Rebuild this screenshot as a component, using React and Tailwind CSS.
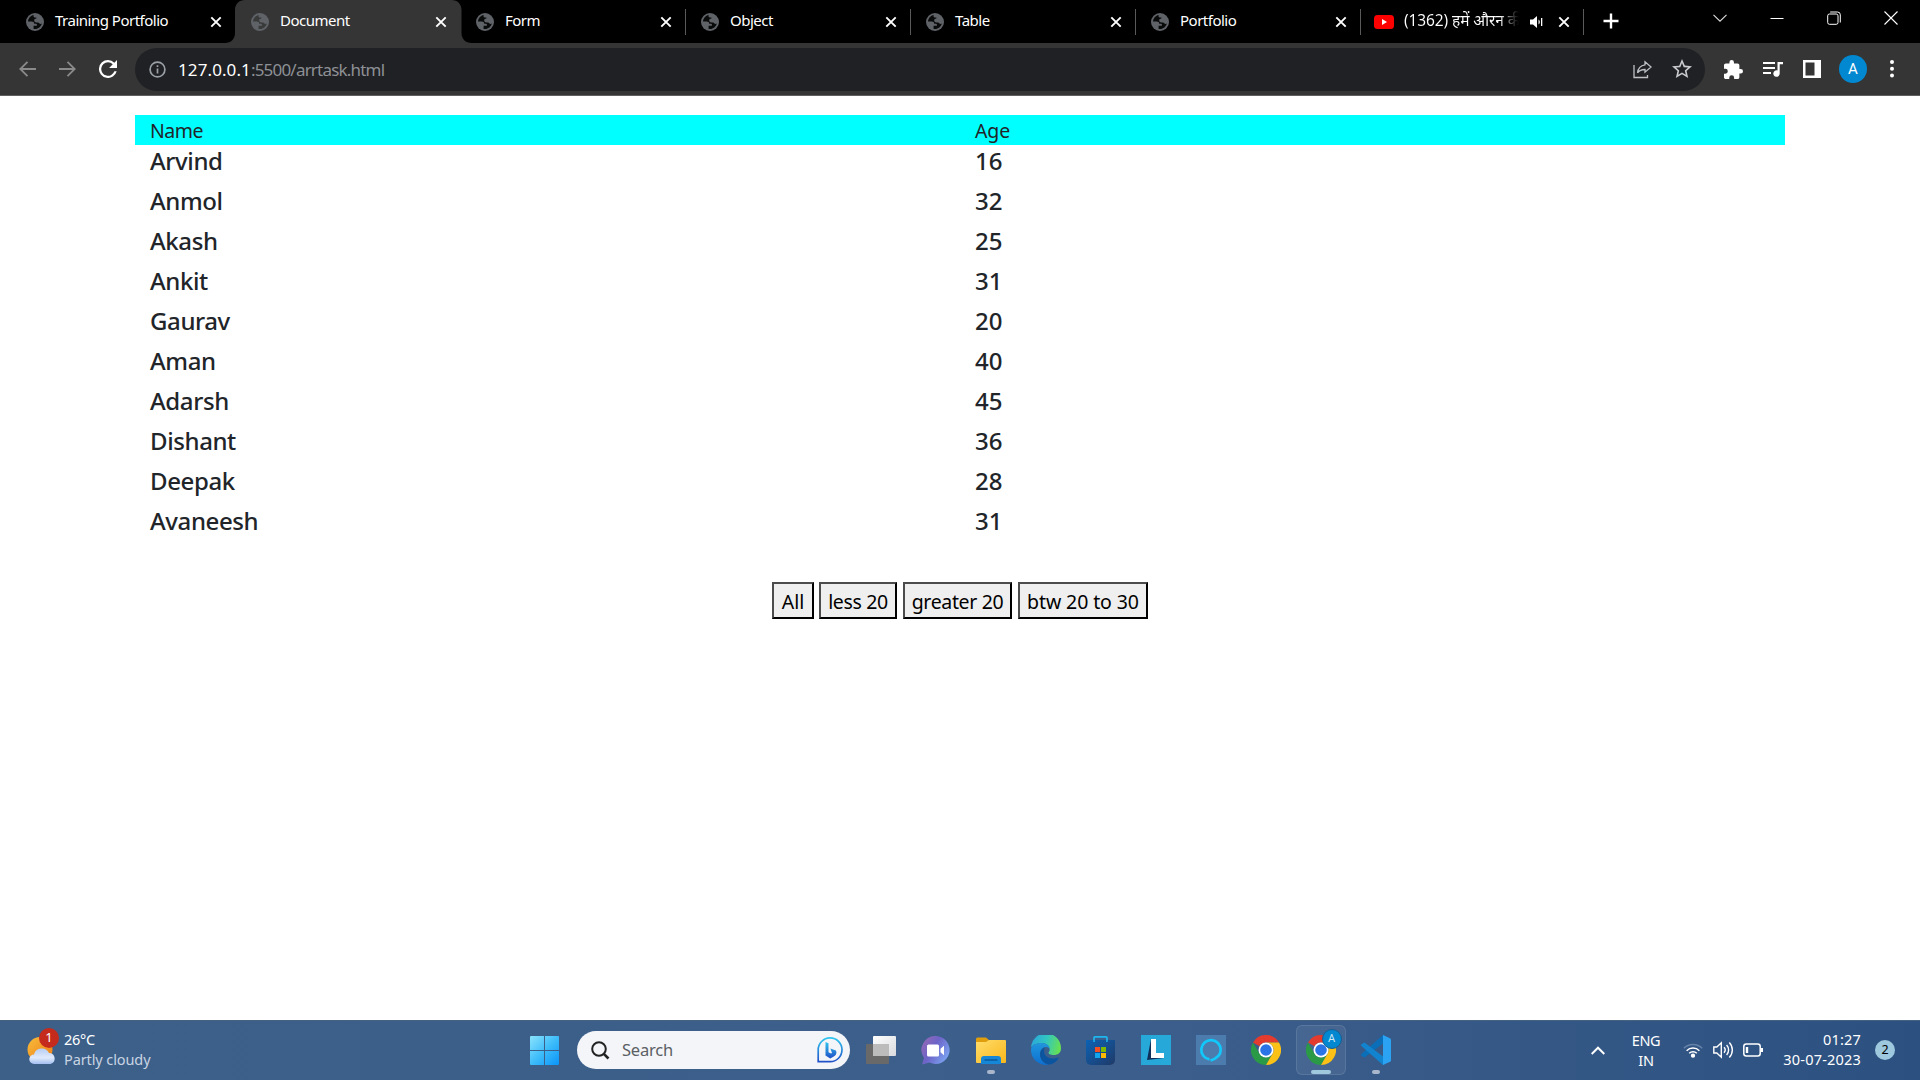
import React from "react";

const people = [
  ["Arvind", 16],
  ["Anmol", 32],
  ["Akash", 25],
  ["Ankit", 31],
  ["Gaurav", 20],
  ["Aman", 40],
  ["Adarsh", 45],
  ["Dishant", 36],
  ["Deepak", 28],
  ["Avaneesh", 31],
];

const Globe = ({ ink }) => (
  <svg width="18" height="18" viewBox="0 0 18 18" className="shrink-0">
    <circle cx="9" cy="9" r="9" fill="#5f6368" />
    <path d="M7.6 2.1C4.6 2.7 2.2 5.300 2 8.600L5.600 8.600C7.300 8.600 8.200 9.400 8.200 10.700L10 10.700C10.600 10.700 10.900 11 10.900 11.600L10.900 12.700L7.600 12.700L7.600 15.900C8.100 16 8.600 16 9 16C12.400 16 15 13.600 15.800 10.500C14.900 11.200 13.600 11 13.100 9.900C12.600 9.600 11.700 9.500 10.800 9.500C9.200 9.500 8.200 8.700 8.200 7.500C8.200 6.300 9.100 5.600 10.400 5.600L10.400 4.600L8.700 4.600C7.900 4.600 7.400 3.900 7.600 2.100Z" fill={ink} fillOpacity=".9" />
  </svg>
);

const CloseX = () => (
  <svg width="12" height="12" viewBox="0 0 12 12" className="shrink-0" stroke="#fff" strokeWidth="1.900">
    <path d="M1.300 1.300 10.700 10.700M10.700 1.300 1.300 10.700" />
  </svg>
);

const Tab = ({ title, active, sep }) => (
  <div className="relative flex h-[43px] w-[225px] shrink-0 items-center pl-4 pr-[13px]">
    {active && (
      <svg className="absolute -left-[10px] top-0" width="247" height="43" viewBox="0 0 247 43" fill="#353535">
        <path d="M0 43C6 43 10 39 10 33V10C10 4 14 0 20 0H226.500C232.500 0 236.500 4 236.500 10V33C236.500 39 240.500 43 246.500 43Z" />
      </svg>
    )}
    <div className="relative flex w-full items-center">
      <Globe ink={active ? "#353535" : "#000"} />
      <span className="-mt-[3px] ml-[11px] flex-1 whitespace-nowrap text-[15px] leading-5 tracking-[-0.5px] text-white">{title}</span>
      <CloseX />
    </div>
    {sep && <div className="absolute right-[-1px] top-[9px] h-[26px] w-px bg-[#5a5a5a]" />}
  </div>
);

const Chrome = () => (
  <svg width="30" height="30" viewBox="0 0 48 48">
    <path d="M3.200 12A24 24 0 0 1 44.800 12H24A12 12 0 0 0 13.600 18Z" fill="#e33b2e" />
    <path d="M3.200 12A24 24 0 0 0 24 48L34.400 30A12 12 0 0 1 13.600 30Z" fill="#2a9a47" />
    <path d="M44.800 12A24 24 0 0 1 24 48L34.400 30A12 12 0 0 0 24 12Z" fill="#fbc116" />
    <circle cx="24" cy="24" r="12" fill="#fff" />
    <circle cx="24" cy="24" r="9.300" fill="#2b74e8" />
  </svg>
);

const Slot = ({ children, dot, wide, box }) => (
  <div className="relative flex h-[60px] w-[55px] items-center justify-center">
    {box && <div className="absolute left-[3px] top-[5px] h-[50px] w-[50px] rounded-[6px] border border-white/10 bg-white/7" />}
    <div className="relative flex">{children}</div>
    {dot && <div className="absolute left-[24px] top-[50px] h-1 w-2 rounded-full bg-[#a9b6cb]" />}
    {wide && <div className="absolute left-[18px] top-[50px] h-1 w-5 rounded-full bg-[#9fc9dc]" />}
  </div>
);

const btn =
  "h-[37px] border-2 border-t-[#4c4c4c] border-l-[#4c4c4c] border-r-black border-b-black bg-[#efefef] text-center text-[19.5px] leading-[35px] text-black whitespace-nowrap ";

export default function App() {
  return (
    <div className="flex h-[1080px] w-[1920px] flex-col overflow-hidden bg-white font-['Noto_Sans','Open_Sans',sans-serif]">
      <header className="flex h-[43px] shrink-0 bg-black pl-[10px]">
        <Tab title="Training Portfolio" />
        <Tab title="Document" active />
        <Tab title="Form" sep />
        <Tab title="Object" sep />
        <Tab title="Table" sep />
        <Tab title="Portfolio" sep />
        <div className="relative flex w-[224px] shrink-0 items-center pl-[14px] pr-[14px]">
          <svg width="20" height="14" viewBox="0 0 20 14" className="shrink-0">
            <rect width="20" height="14" rx="3.500" fill="#f00" />
            <path d="M8 4v6l5-3z" fill="#fff" />
          </svg>
          <span className="-mt-[3px] ml-[10px] w-[117px] shrink-0 overflow-hidden whitespace-nowrap bg-gradient-to-r from-white from-82% to-black bg-clip-text text-[15.500px] leading-7 tracking-[-0.1px] text-transparent">
            (1362) हमें औरन की
          </span>
          <svg width="13" height="12" viewBox="0 0 13 12" className="ml-[9px] shrink-0" fill="#fff">
            <path d="M0 3.500h3L7 0v12L3 8.500H0zM8.500 3.500v5a3 3 0 0 0 0-5zM11 2h1.300v8H11z" />
          </svg>
          <div className="ml-auto flex"><CloseX /></div>
          <div className="absolute right-0 top-[9px] h-[26px] w-px bg-[#5a5a5a]" />
        </div>
        <svg width="16" height="16" viewBox="0 0 16 16" className="ml-[19px] mt-[13px]" stroke="#fff" strokeWidth="2.400">
          <path d="M8 .5v15M.5 8h15" />
        </svg>
        <div className="ml-auto mr-[22px] flex h-9 items-center gap-[43px] text-white">
          <svg width="14" height="14" viewBox="0 0 14 14" fill="none" stroke="#ddd" strokeWidth="1.100"><path d="M.5 3.800 7 10.200l6.500-6.400" /></svg>
          <svg width="14" height="14" viewBox="0 0 14 14" stroke="#fff"><path d="M.5 7.500h13" /></svg>
          <svg width="14" height="14" viewBox="0 0 14 14" fill="none" stroke="#fff"><rect x=".7" y="3" width="10.300" height="10.300" rx="1.800" /><path d="M3.200 1H10.500a2.800 2.800 0 0 1 2.800 2.800v7.700" /></svg>
          <svg width="14" height="14" viewBox="0 0 14 14" stroke="#fff" strokeWidth="1.100"><path d="m.5.5 13 13M13.500.5l-13 13" /></svg>
        </div>
      </header>

      <nav className="flex h-[53px] shrink-0 items-center border-b border-[#5f5f5f] bg-[#353535] pl-[19px]">
        <svg width="17" height="16" viewBox="0 0 17 16" fill="none" stroke="#8a8a8a" strokeWidth="1.800"><path d="M17 8H1.500M8.500 .8 1.300 8l7.200 7.200" /></svg>
        <svg width="17" height="16" viewBox="0 0 17 16" className="ml-[23px]" fill="none" stroke="#8a8a8a" strokeWidth="1.800"><path d="M0 8h15.500M8.500 .8 15.700 8l-7.200 7.200" /></svg>
        <svg width="18" height="18" viewBox="4 4 16 16" className="ml-[23px]" fill="#fff"><path d="M17.650 6.350A7.960 7.960 0 0 0 12 4a8 8 0 1 0 7.730 10h-2.080A6 6 0 1 1 12 6c1.660 0 3.140.69 4.220 1.780L13 11h7V4z" /></svg>
        <div className="ml-[18px] flex h-[43px] w-[1570px] items-center rounded-full bg-[#202124] pl-[14px] pr-[13px]">
          <svg width="17" height="17" viewBox="0 0 17 17" fill="none" stroke="#9aa0a6" strokeWidth="1.700"><circle cx="8.500" cy="8.500" r="7.400" /><path d="M8.500 7.500v5M8.500 4.300V6" /></svg>
          <span className="ml-[12px] pt-px text-[17px] leading-6 tracking-[-0.8px] text-[#8d9095]"><span className="tracking-[0.1px] text-white">127.0.0.1</span>:5500/arrtask.html</span>
          <svg width="19" height="19" viewBox="0 0 19 19" className="ml-auto" fill="none" stroke="#bdc1c6" strokeWidth="1.300"><path d="M1 5v12.500h13.500V15M12 1.800l6 5.200-6 5.200V9.500c-3.500 0-5.800 1-7.500 3.400C5 8.500 7.800 5.400 12 4.800z" /></svg>
          <svg width="20" height="20" viewBox="2 2 20 20" className="ml-[20px]" fill="#c8cacd"><path d="M22 9.240l-7.190-.62L12 2 9.190 8.630 2 9.240l5.460 4.730L5.820 21 12 17.270 18.180 21l-1.630-7.030L22 9.240zM12 15.400l-3.760 2.270 1-4.280-3.320-2.880 4.380-.38L12 6.100l1.710 4.040 4.380.38-3.320 2.880 1 4.280L12 15.400z" /></svg>
        </div>
        <svg width="19" height="19" viewBox="2 1 21 21" className="ml-[19px]" fill="#fff"><path d="M20.500 11H19V7c0-1.100-.9-2-2-2h-4V3.500a2.500 2.500 0 0 0-5 0V5H4c-1.100 0-1.990.9-1.990 2v3.800H3.500a2.700 2.700 0 0 1 0 5.400H2V20c0 1.100.9 2 2 2h3.800v-1.500a2.700 2.700 0 0 1 5.400 0V22H17c1.100 0 2-.9 2-2v-4h1.500a2.500 2.500 0 0 0 0-5z" /></svg>
        <svg width="20" height="16" viewBox="0 0 20 16" className="ml-[20px]" fill="#fff"><path d="M0 1h12v1.900H0zM0 6h12v1.900H0zM0 11h8v1.900H0zM14.500 1H20v2.200h-3.300V12.500a3.200 3.200 0 1 1-2.200-3z" /></svg>
        <svg width="18" height="18" viewBox="0 0 18 18" className="ml-[20px]"><path fill="#fff" fillRule="evenodd" d="M0 0h18v18H0zM2.500 2.500v13h9v-13z" /></svg>
        <div className="ml-[18px] flex h-7 w-7 items-center justify-center rounded-full bg-[#0288d1] font-[Roboto] text-[15px] text-white">A</div>
        <svg width="4" height="18" viewBox="0 0 4 18" className="ml-[23px]" fill="#fff"><circle cx="2" cy="2" r="2" /><circle cx="2" cy="8.800" r="2" /><circle cx="2" cy="15.600" r="2" /></svg>
      </nav>

      <main className="flex flex-1 flex-col pl-[135px] pr-[135px] pt-[19px] text-[#212529]">
        <div className="grid h-[30px] grid-cols-2 bg-[#0ff] text-[19.500px] leading-[32px]">
          <div className="pl-[15px] tracking-[-0.5px]">Name</div>
          <div className="pl-[15px] tracking-[-0.1px]">Age</div>
        </div>
        {people.map(([name, age]) => (
          <div key={name} className="mb-[10px] grid h-[30px] grid-cols-2 text-[24px] font-[550] leading-[31px]">
            <div className="pl-[15px] tracking-[-0.4px]">{name}</div>
            <div className="pl-[15px] tracking-[0.1px]">{age}</div>
          </div>
        ))}
        <div className="mt-[37px] flex justify-center">
          <button className={btn + "w-[42px]"}>All</button>
          <button className={btn + "ml-[5px] w-[78px] tracking-[-0.35px]"}>less 20</button>
          <button className={btn + "ml-[6px] w-[109px] tracking-[-0.35px]"}>greater 20</button>
          <button className={btn + "ml-[6px] w-[130px] tracking-[-0.1px]"}>btw 20 to 30</button>
        </div>
      </main>

      <footer className="flex h-[60px] shrink-0 items-center border-t border-[#44617f] bg-gradient-to-r from-[#3c6088] via-[#3c5e8c] via-60% to-[#2c5180] pb-px text-white">
        <div className="flex w-[530px] items-center pl-[27px]">
          <div className="relative h-[30px] w-[30px]">
            <svg width="30" height="30" viewBox="0 0 30 30">
              <defs>
                <linearGradient id="sun" x1="0" y1="0" x2="1" y2="1"><stop stopColor="#f7bd3c" /><stop offset="1" stopColor="#ee7a12" /></linearGradient>
                <linearGradient id="cloud" x1="0" y1="0" x2="0" y2="1"><stop stopColor="#b7cdf4" /><stop offset=".6" stopColor="#e0eafb" /><stop offset="1" stopColor="#a3bff0" /></linearGradient>
              </defs>
              <circle cx="13" cy="14.500" r="12.500" fill="url(#sun)" />
              <path d="M7 29a4.500 4.500 0 0 1 0-9.500 8 8 0 0 1 15-1.500 5.600 5.600 0 0 1 1.500 11z" fill="url(#cloud)" />
            </svg>
            <div className="absolute -top-[7px] left-3 flex h-5 w-5 items-center justify-center rounded-full bg-[#c42b1c] text-[13px]">1</div>
          </div>
          <div className="ml-[7px] pb-[3px] text-[14.500px] leading-5">
            <div className="tracking-[-0.3px]">26°C</div>
            <div className="tracking-[-0.1px] text-[#c9d4e3]">Partly cloudy</div>
          </div>
        </div>
        <svg width="29" height="29" viewBox="0 0 29 29">
          <defs><linearGradient id="win" gradientUnits="userSpaceOnUse" x1="0" y1="0" x2="29" y2="29"><stop stopColor="#8be3fd" /><stop offset=".5" stopColor="#3fbdfa" /><stop offset="1" stopColor="#0a94f8" /></linearGradient></defs>
          <path fill="url(#win)" d="M1 0h13v14H0V1a1 1 0 0 1 1-1zM15 0h13a1 1 0 0 1 1 1v13H15zM0 15h14v14H1a1 1 0 0 1-1-1zM15 15h14v13a1 1 0 0 1-1 1H15z" />
        </svg>
        <div className="ml-[18px] flex h-[38px] w-[273px] items-center rounded-full bg-[#f3f5f9] pl-[14px] pr-[7px]">
          <svg width="19" height="19" viewBox="0 0 19 19" fill="none" stroke="#222" strokeWidth="2"><circle cx="8" cy="8" r="6.800" /><path d="m12.800 12.800 4.700 4.700" strokeWidth="2.600" /></svg>
          <span className="ml-[12px] pt-px text-[16.500px] tracking-[-0.2px] text-[#5b5f64]">Search</span>
          <svg width="26" height="26" viewBox="0 0 26 26" className="ml-auto" fill="none">
            <defs><linearGradient id="bing" x1="0" y1="0" x2="0" y2="1"><stop stopColor="#2fc6ee" /><stop offset="1" stopColor="#2050c8" /></linearGradient></defs>
            <path d="M1.200 24.700V13A11.900 11.900 0 1 1 13 24.700z" stroke="url(#bing)" strokeWidth="1.700" />
            <path d="M8.500 5l3 1.200v9l2.500 1.300 1-.6-1.600-4.400 5.500 2c1.500 3-.5 5.300-2.500 6.300l-3.200 1.600-4.700-3z" fill="url(#bing)" />
          </svg>
        </div>
        <div className="ml-[3px] flex">
          <Slot>
            <svg width="30" height="28" viewBox="0 0 30 28"><defs><linearGradient id="tv" x1="0" y1="0" x2="1" y2="1"><stop stopColor="#fff" /><stop offset="1" stopColor="#d8dadd" /></linearGradient></defs>
              <rect y="8" width="23" height="20" rx="1" fill="#696969" /><rect x="7" width="23" height="20" rx="1" fill="url(#tv)" /><path d="M7 8h16v12H7z" fill="#bcbcbc" /></svg>
          </Slot>
          <Slot>
            <svg width="29" height="29" viewBox="0 0 29 29"><defs><linearGradient id="chat" x1="0" y1="0" x2="1" y2=".6"><stop stopColor="#9a6bb0" /><stop offset=".5" stopColor="#6d63c8" /><stop offset="1" stopColor="#7aa0ee" /></linearGradient></defs>
              <path d="M15 0a14 14 0 1 1-6.500 26.600L1 28.500l2-6.500A14 14 0 0 1 15 0z" fill="url(#chat)" /><rect x="6" y="8.500" width="12" height="12" rx="1.500" fill="#fff" /><path d="M19.500 12.800l3.500-3v9.400l-3.500-3z" fill="#fff" /></svg>
          </Slot>
          <Slot dot>
            <svg width="30" height="28" viewBox="0 0 30 28"><defs><linearGradient id="fold" x1="0" y1="0" x2="1" y2="1"><stop stopColor="#ffdc6b" /><stop offset="1" stopColor="#f9b81b" /></linearGradient></defs>
              <path d="M0 7V3a1.500 1.500 0 0 1 1.500-1.500H10L13 4v4H0z" fill="#e09d0c" /><path d="M0 6h10l3-2h16a1 1 0 0 1 1 1v21a1 1 0 0 1-1 1H1a1 1 0 0 1-1-1z" fill="url(#fold)" /><path d="M5 28v-5a3 3 0 0 1 3-3h14a3 3 0 0 1 3 3v5z" fill="#1587d6" /><path d="M9 24h12" stroke="#0a5a9c" strokeWidth="1.300" strokeLinecap="round" /></svg>
          </Slot>
          <Slot>
            <svg width="30" height="30" viewBox="0 0 30 30"><defs>
              <linearGradient id="e1" x1="0" y1=".3" x2="1" y2=".5"><stop stopColor="#2aa5dc" /><stop offset=".5" stopColor="#32c6c0" /><stop offset="1" stopColor="#66e052" /></linearGradient>
              <linearGradient id="e2" x1="0" y1="0" x2="0" y2="1"><stop stopColor="#2196dd" /><stop offset="1" stopColor="#0c6fd0" /></linearGradient></defs>
              <path d="M0 13A15 15 0 0 1 30 13.500C30 18 26.500 20 23 20c-4 0-5.500-1.200-5.500-2.200 0-.8 1.200-1.400 1.200-3.300C18.700 10.800 15 8 10.500 8 5 8 1 10.500 0 13z" fill="url(#e1)" />
              <path d="M0 15C0 10.500 5 8 10.500 8c4.800 0 8.200 2.900 8.200 6.300-1-1.800-2.500-2.300-3.700-2.300-3 0-6 3-6 7.300C9 24 12.500 29 18 29.700A15 15 0 0 1 0 15z" fill="url(#e2)" />
              <path d="M13.500 12.300C10.500 13.500 9 16.500 9 19.300 9 24.500 13.500 30 19 29.500c3.500-.8 6.800-3.300 8.600-6.300.3-.6-.2-1-.8-.7-1.500.7-3 1-5 1-5 0-8.700-3.200-8.700-7 0-2 .4-3.400.4-4.200z" fill="#0b55a0" /></svg>
          </Slot>
          <Slot>
            <svg width="29" height="29" viewBox="0 0 29 29"><defs><linearGradient id="st" x1="0" y1="0" x2="1" y2="1"><stop stopColor="#0c62b4" /><stop offset="1" stopColor="#203a68" /></linearGradient></defs>
              <path d="M8 6V1.800A1.300 1.300 0 0 1 9.300.8h10.400A1.300 1.300 0 0 1 21 1.800V6" fill="none" stroke="#1fb6ee" strokeWidth="1.700" /><path d="M0 4h29v20a5 5 0 0 1-5 5H5a5 5 0 0 1-5-5z" fill="url(#st)" /><path d="M7.300 4h1.500v2H7.300zM20.200 4h1.500v2h-1.500z" fill="#1fb6ee" />
              <path d="M9 11h5v5H9z" fill="#f25022" /><path d="M15 11h5v5h-5z" fill="#7fba00" /><path d="M9 17h5v5H9z" fill="#12a5ee" /><path d="M15 17h5v5h-5z" fill="#ffb900" /></svg>
          </Slot>
          <Slot>
            <svg width="30" height="30" viewBox="0 0 30 30"><path d="M0 0h30v30H0z" fill="#26a9d9" /><path d="M10 4L6 25l17-2-12-3z" fill="#10305c" /><path d="M10 4h5v14h8v5H10z" fill="#fff" /></svg>
          </Slot>
          <Slot>
            <svg width="30" height="30" viewBox="0 0 30 30"><path d="M0 0h30v30H0z" fill="#4b7cad" /><path d="M13.500 24.400A9.700 9.700 0 1 1 24.700 15C24.700 20.500 19 24 14.500 25.500" fill="none" stroke="#12c8fa" strokeWidth="2.700" /></svg>
          </Slot>
          <Slot><Chrome /></Slot>
          <Slot wide box>
            <Chrome />
            <div className="absolute -top-[6px] left-4 flex h-5 w-5 items-center justify-center rounded-full border border-[#1a5d8f] bg-[#0288d1] font-[Roboto] text-[11px] text-[#cfe8f5]">A</div>
          </Slot>
          <Slot dot>
            <svg width="30" height="30" viewBox="0 0 30 30"><path d="M22 0L22 8.500 3.500 22.500.4 20.700c-.5-.5-.5-1.300 0-1.800z" fill="#0a6fb8" /><path d="M22 30V21.500L3.500 7.500.4 9.300c-.5.500-.5 1.300 0 1.800z" fill="#1284cf" /><path d="M22 0l7 3.200c.6.300 1 .9 1 1.600v20.400c0 .7-.4 1.300-1 1.600L22 30z" fill="#2ba3f2" /></svg>
          </Slot>
        </div>
        <svg width="14" height="9" viewBox="0 0 14 9" className="ml-[188px]" fill="none" stroke="#fff" strokeWidth="2"><path d="m.7 8L7 1.700 13.300 8" /></svg>
        <div className="ml-[24px] w-[34px] pb-px text-center text-[14.500px] leading-5 tracking-[-0.3px]">ENG<br />IN</div>
        <svg width="20" height="16" viewBox="0 0 20 16" className="ml-[20px]" fill="none" stroke="#fff" strokeWidth="1.500"><path d="M.8 6.200a13 13 0 0 1 18.400 0" stroke="#6583a8" /><path d="M3.600 8.700a9.200 9.200 0 0 1 12.800 0M6.200 11.300a5.500 5.500 0 0 1 7.600 0" /><circle cx="10" cy="13.700" r="1.400" fill="#fff" /></svg>
        <svg width="21" height="18" viewBox="0 0 21 18" className="ml-[10px]" fill="none" stroke="#fff" strokeWidth="1.400"><path d="M.8 6v6h3l4.500 4.200V1.800L3.800 6zM11 6.300a4 4 0 0 1 0 5.400M13.600 4a7.300 7.300 0 0 1 0 10M16.300 1.500a10.800 10.800 0 0 1 0 15" /></svg>
        <svg width="20" height="14" viewBox="0 0 20 14" className="ml-[9px]" fill="none" stroke="#fff" strokeWidth="1.500"><rect x=".8" y="1" width="16.400" height="12" rx="2.500" /><path d="M18.800 5v4M4 4v6" strokeWidth="2.400" /></svg>
        <div className="ml-auto mr-[14px] pb-[3px] text-right text-[14.500px] leading-5 tracking-[0.2px]">01:27<br />30-07-2023</div>
        <div className="mr-[25px] flex h-5 w-5 items-center justify-center rounded-full bg-[#9dc8dd] text-[12.500px] text-black">2</div>
      </footer>
    </div>
  );
}
